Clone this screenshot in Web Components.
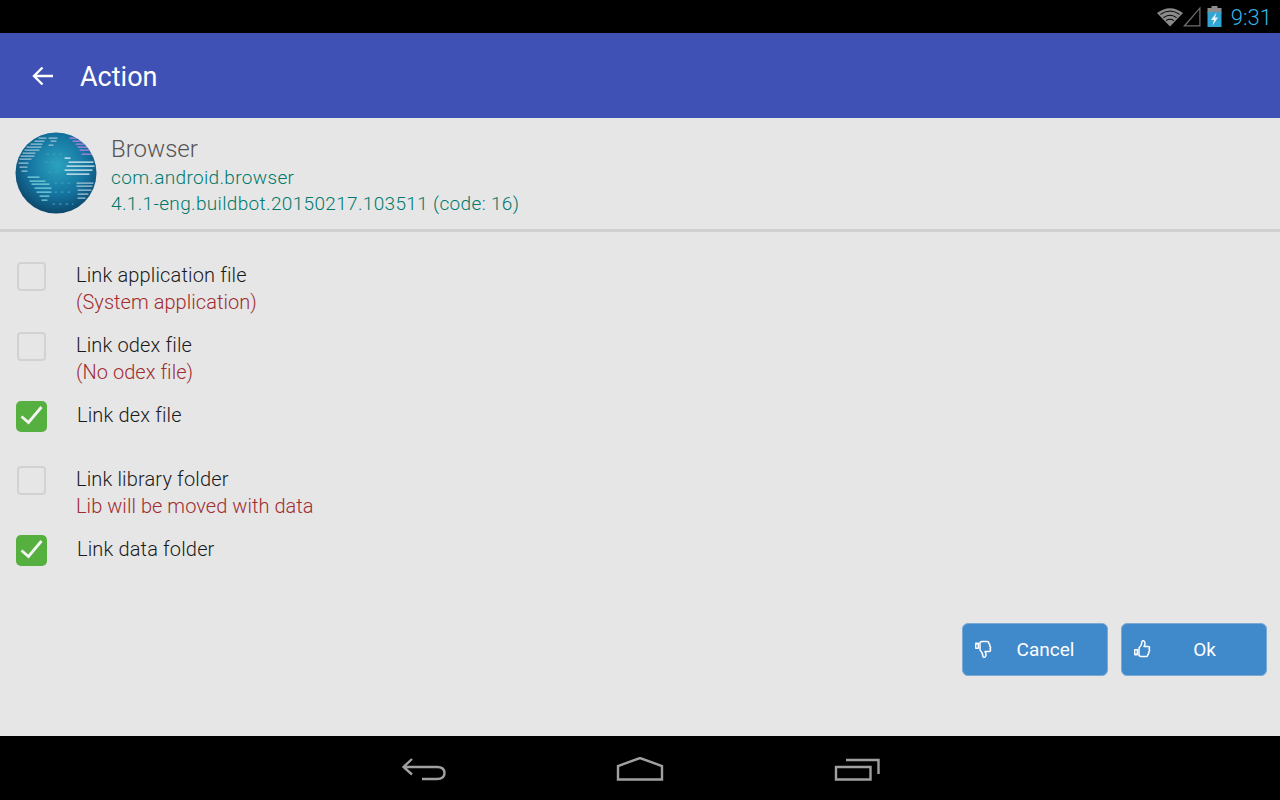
<!DOCTYPE html>
<html>
<head>
<meta charset="utf-8">
<style>
  html, body { margin: 0; height: 100%; background: #e6e6e6; font-family: Roboto, sans-serif; overflow: hidden; }
  app-screen { height: 800px; }
</style>
</head>
<body>
<app-screen>
  <status-bar></status-bar>
  <app-bar title="Action"></app-bar>
  <app-info name="Browser" pkg="com.android.browser" version="4.1.1-eng.buildbot.20150217.103511 (code: 16)"></app-info>
  <option-list>
    <option-row label="Link application file" note="(System application)"></option-row>
    <option-row label="Link odex file" note="(No odex file)"></option-row>
    <option-row label="Link dex file" checked></option-row>
    <option-row label="Link library folder" note="Lib will be moved with data"></option-row>
    <option-row label="Link data folder" checked></option-row>
  </option-list>
  <button-row>
    <action-button icon="down" style="width:146px">Cancel</action-button>
    <action-button icon="up" style="width:146px">Ok</action-button>
  </button-row>
  <nav-bar></nav-bar>
</app-screen>

<script>
class AppScreen extends HTMLElement {
    constructor() {
        super()
        this.attachShadow({ mode: 'open' }).innerHTML = `
      <style>
        :host { display: flex; flex-direction: column; width: 1280px; background: #e6e6e6; }
      </style>
      <slot></slot>
    `
    }
}

class StatusBar extends HTMLElement {
    constructor() {
        super()
        this.attachShadow({ mode: 'open' }).innerHTML = `
      <style>
        :host { display: flex; align-items: center; justify-content: flex-end; height: 33px; background: #000; padding-right: 8px; box-sizing: border-box; }
        svg { display: block; }
        .time { color: #33b5e5; font-size: 22px; font-weight: 300; margin-left: 9px; line-height: 33px; position: relative; top: 1px; }
      </style>
      <svg width="26" height="21" viewBox="0 0 26 21">
        <path d="M13 20.5 L0 7 Q13 -2.5 26 7 Z" fill="#8a8a8a"/>
        <path d="M3.4 8.4 Q13 1.6 22.6 8.4 M6.4 11.6 Q13 6.8 19.6 11.6 M9.2 14.6 Q13 12 16.8 14.6" fill="none" stroke="#000" stroke-width="1.1"/>
      </svg>
      <svg width="18" height="21" viewBox="0 0 18 21">
        <path d="M17.5 .5 V20.5 H0 Z M16.3 3.4 L3 19.3 H16.3 Z" fill="#6f6f6f" fill-rule="evenodd"/>
      </svg>
      <svg width="15" height="21" viewBox="0 0 15 21" style="margin-left:6px">
        <rect x="4.5" y="0" width="6" height="2" fill="#8c8c8c"/>
        <rect x="0.5" y="2" width="14" height="5" fill="#8c8c8c"/>
        <rect x="0.5" y="6" width="14" height="15" fill="#33a5d5"/>
        <path d="M9.5 6.5 L4 14 H7 L5.5 19.5 L11 11.5 H8 Z" fill="#e8f4f8"/>
      </svg>
      <span class="time">9:31</span>
    `
    }
}

class AppBar extends HTMLElement {
    constructor() {
        super()
        this.attachShadow({ mode: 'open' }).innerHTML = `
      <style>
        :host { display: flex; align-items: center; height: 85px; background: #3f51b5; color: #fff; padding-left: 32px; box-sizing: border-box; }
        svg { display: block; }
        .title { font-size: 27px; margin-left: 26px; position: relative; top: 1px; }
      </style>
      <svg width="22" height="20" viewBox="0 0 22 20">
        <path d="M21 10 H2 M10.5 1.5 L2 10 L10.5 18.5" fill="none" stroke="#fff" stroke-width="2.4"/>
      </svg>
      <span class="title">${this.getAttribute('title')}</span>
    `
    }
}

class AppInfo extends HTMLElement {
    constructor() {
        super()
        this.attachShadow({ mode: 'open' }).innerHTML = `
      <style>
        :host { display: flex; align-items: flex-start; height: 114px; box-sizing: border-box; border-bottom: 3px solid #d0d0d0; padding: 14px 0 0 15px; }
        svg { display: block; flex: none; }
        .text { margin-left: 14px; font-weight: 300; padding-top: 2px; }
        .name { font-size: 24px; line-height: 31px; color: #555; }
        .line { font-size: 19px; line-height: 26px; color: #00796b; letter-spacing: 0.34px; }
      </style>
      <svg width="82" height="82" viewBox="0 0 82 82">
        <defs>
          <radialGradient id="g" cx="0.52" cy="0.4" r="0.62">
            <stop offset="0" stop-color="#2ba3bf"/>
            <stop offset="0.6" stop-color="#14739f"/>
            <stop offset="1" stop-color="#0c4468"/>
          </radialGradient>
          <clipPath id="c"><circle cx="41" cy="41" r="40.5"/></clipPath>
          <filter id="soft"><feGaussianBlur stdDeviation="0.55"/></filter>
        </defs>
        <circle cx="41" cy="41" r="40.5" fill="url(#g)"/>
        <g clip-path="url(#c)" filter="url(#soft)" fill="none" stroke-width="1.25" stroke-linecap="round">
          <path stroke="#9cc4d6" d="M24 6H31 M34 6H42 M20 9H29 M36 9H41 M16 12H27 M34 13H38 M12 15H26 M10 18H24 M8 21H20 M6 24H19 M5 27H16 M4 31H13 M5 35H12 M7 39H12"/>
          <path stroke="#7fd4de" d="M13 45H24 M15 49H30 M17 52H34 M20 56H36 M22 60H36 M25 64H34 M27 68H32"/>
          <path stroke="#e4f0f5" d="M50 26H55 M54 30H78 M52 34H79 M50 38H77 M52 42H74"/>
          <path stroke="#b884e4" d="M55 6H64 M58 9H70 M61 12H74 M63 15H76 M65 18H78 M67 22H79"/>
          <path stroke="#a4c6d6" d="M62 51H78 M62 54H77 M63 58H76 M63 62H73 M63 66H70"/>
          <path stroke="#3d9cc0" stroke-dasharray="1.5 5" d="M32 22H50 M30 30H46 M34 40H44 M40 51H58 M40 60H58 M38 72H58"/>
        </g>
      </svg>
      <div class="text">
        <div class="name">${this.getAttribute('name')}</div>
        <div class="line">${this.getAttribute('pkg')}</div>
        <div class="line">${this.getAttribute('version')}</div>
      </div>
    `
    }
}

class OptionList extends HTMLElement {
    constructor() {
        super()
        this.attachShadow({ mode: 'open' }).innerHTML = `
      <style>
        :host { display: block; padding-top: 29px; }
      </style>
      <slot></slot>
    `
    }
}

class OptionRow extends HTMLElement {
    constructor() {
        super()
        const checked = this.hasAttribute('checked')
        const note = this.getAttribute('note')
        this.attachShadow({ mode: 'open' }).innerHTML = `
      <style>
        :host { display: flex; align-items: flex-start; height: ${checked ? 64 : 70}px; padding-left: 16px; box-sizing: border-box; }
        .box { flex: none; box-sizing: border-box; width: 29px; height: 29px; margin: 1px 0 0 1px; border: 2px solid #d2d2d2; border-radius: 4px; }
        .on { width: 31px; height: 31px; margin: 0; background: #55b03f; border: 0; border-radius: 5px; }
        .on svg { display: block; }
        .text { margin-left: 30px; padding-top: 1px; font-size: 20px; line-height: 27px; font-weight: 300; letter-spacing: 0.15px; color: #1a1a1a; }
        .note { color: #a02c30; letter-spacing: 0.05px; }
      </style>
      <div class="box ${checked ? 'on' : ''}">
        ${checked ? '<svg width="31" height="31" viewBox="0 0 31 31"><path d="M5.5 15.5 L12.5 21.5 L25.5 6" fill="none" stroke="#f4f4f4" stroke-width="2.8"/></svg>' : ''}
      </div>
      <div class="text">
        <div>${this.getAttribute('label')}</div>
        ${note ? `<div class="note">${note}</div>` : ''}
      </div>
    `
    }
}

class ButtonRow extends HTMLElement {
    constructor() {
        super()
        this.attachShadow({ mode: 'open' }).innerHTML = `
      <style>
        :host { display: flex; justify-content: flex-end; gap: 13px; padding: 24px 13px 0 0; flex: 1; align-items: flex-start; }
      </style>
      <slot></slot>
    `
    }
}

const THUMB = 'M6 8 C8 6 9 4 9 1.6 C9 .6 10.6 .4 11.4 1.4 C12.2 2.6 12 4.8 11 6.4 H15 C16.6 6.4 17 8 16 9 C16.9 9.8 16.8 11.2 15.6 11.8 C16.2 12.8 15.8 14 14.8 14.4 C15 15.6 14.2 16.5 13 16.5 H8 C7 16.5 6.6 16 6 15.6 Z'

class ActionButton extends HTMLElement {
    constructor() {
        super()
        const down = this.getAttribute('icon') === 'down'
        this.attachShadow({ mode: 'open' }).innerHTML = `
      <style>
        :host { display: flex; align-items: center; height: 53px; background: #4089cb; border: 1px solid #7aa9d4; border-radius: 6px; box-sizing: border-box; color: #fff; font-size: 19px; position: relative; }
        svg { position: absolute; left: 11px; top: 16px; }
        .label { flex: 1; text-align: center; padding-left: 21px; }
      </style>
      <svg width="18" height="18" viewBox="0 0 18 18">
        <g ${down ? 'transform="translate(0 18) scale(1 -1)"' : ''}>
          <path d="${THUMB}" fill="none" stroke="#fff" stroke-width="1.5" stroke-linejoin="round"/>
          <rect x="1" y="9" width="4" height="6.4" rx="0.8" fill="#fff"/>
          <rect x="2.4" y="10.4" width="1.2" height="3" fill="#4089cb"/>
        </g>
      </svg>
      <span class="label"><slot></slot></span>
    `
    }
}

class NavBar extends HTMLElement {
    constructor() {
        super()
        this.attachShadow({ mode: 'open' }).innerHTML = `
      <style>
        :host { display: flex; justify-content: center; align-items: center; gap: 170px; height: 64px; background: #000; flex: none; padding: 2px 0 0 2px; box-sizing: border-box; }
        svg { display: block; }
      </style>
      <svg width="44" height="24" viewBox="0 0 44 24"><path d="M10 2 L1.5 10 L10 17.5 M1.5 10 H35 Q42.5 10 42.5 16 Q42.5 22 35 22 H20" fill="none" stroke="#a0a0a0" stroke-width="2.4"/></svg>
      <svg width="48" height="24" viewBox="0 0 48 24"><path d="M2 22.5 V9 L24 1 L46 9 V22.5 Z" fill="none" stroke="#a0a0a0" stroke-width="2.4"/></svg>
      <svg width="46" height="24" viewBox="0 0 46 24"><path d="M2 10 H36.5 V22.5 H2 Z M12 3 H44.5 V17" fill="none" stroke="#a0a0a0" stroke-width="2.4"/></svg>
    `
    }
}

customElements.define('app-screen', AppScreen)
customElements.define('status-bar', StatusBar)
customElements.define('app-bar', AppBar)
customElements.define('app-info', AppInfo)
customElements.define('option-list', OptionList)
customElements.define('option-row', OptionRow)
customElements.define('button-row', ButtonRow)
customElements.define('action-button', ActionButton)
customElements.define('nav-bar', NavBar)
</script>
</body>
</html>
